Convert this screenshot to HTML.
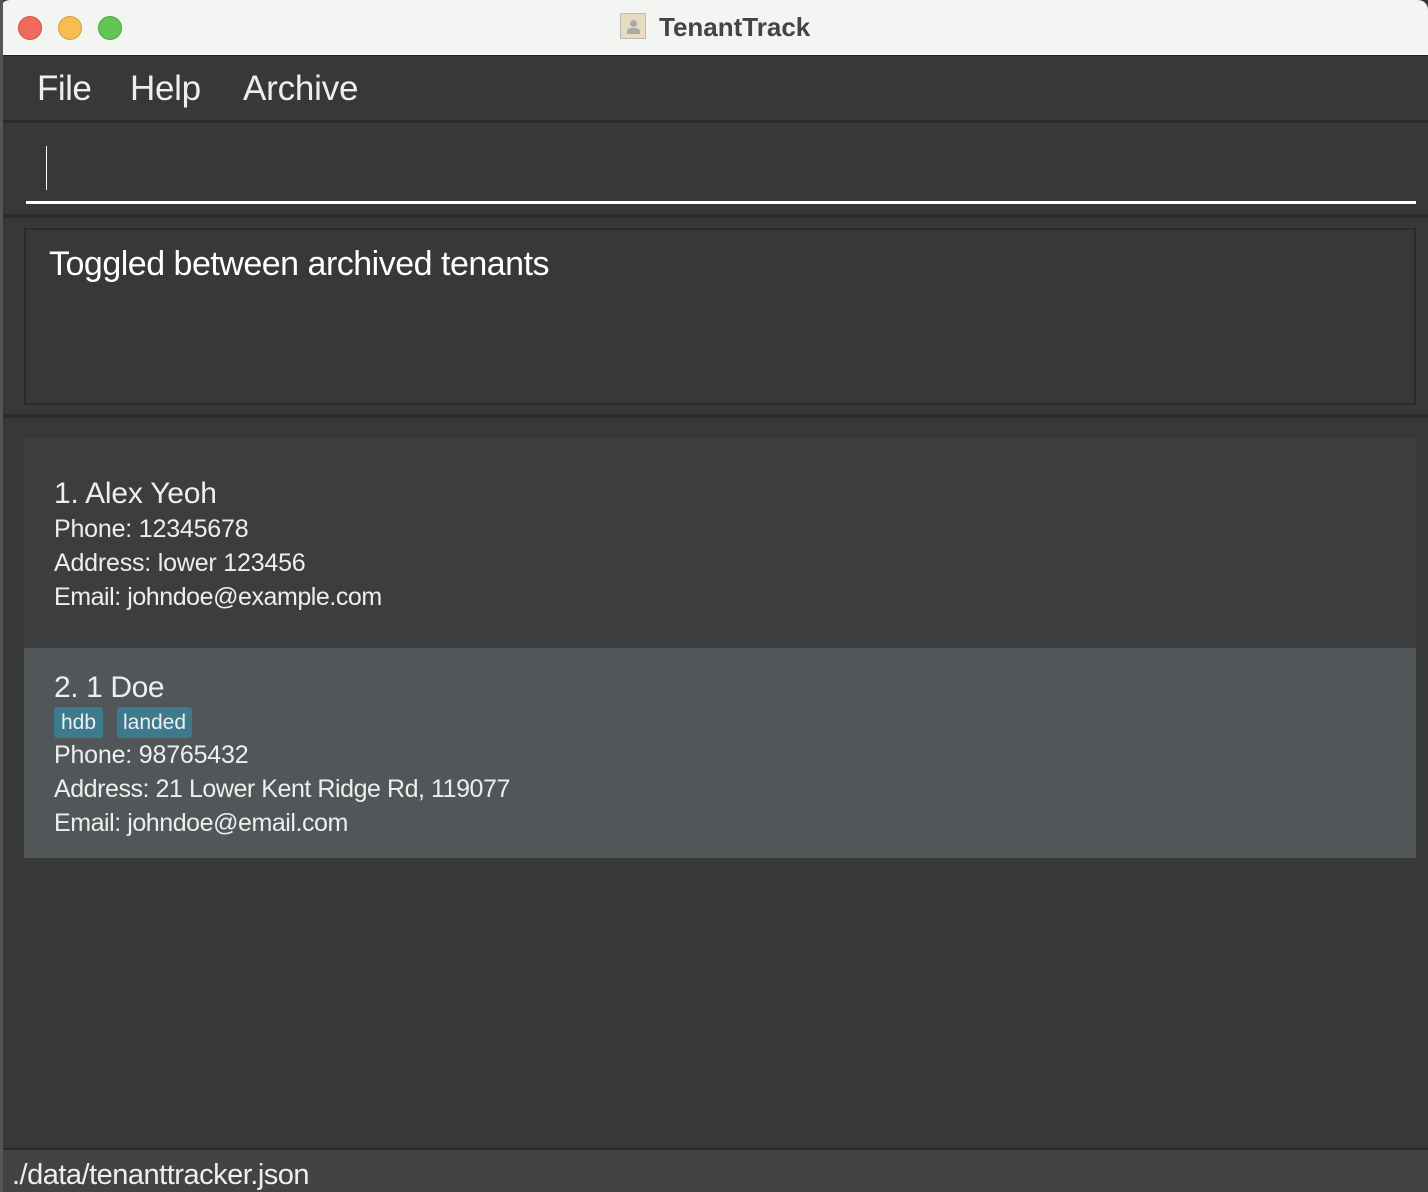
<!DOCTYPE html>
<html><head><meta charset="utf-8"><style>
*{margin:0;padding:0;box-sizing:border-box}
body{width:1428px;height:1192px;background:#383838;font-family:"Liberation Sans",sans-serif;position:relative;overflow:hidden;color:#eee}
.a{position:absolute}
.t{white-space:nowrap}
.d{font-size:25px;letter-spacing:-0.45px}
</style></head><body>
<div class="a" style="left:0;top:0;width:1428px;height:56px;background:#f3f5f2;border-radius:10px 10px 0 0;border-bottom:1px solid #222"></div>
<div class="a" style="left:0;top:0;width:3px;height:1192px;background:#555"></div>
<div class="a" style="left:18px;top:16px;width:24px;height:24px;border-radius:50%;background:#ee6a5f;border:1px solid #d0534a"></div>
<div class="a" style="left:58px;top:16px;width:24px;height:24px;border-radius:50%;background:#f5be4f;border:1px solid #d6a13a"></div>
<div class="a" style="left:98px;top:16px;width:24px;height:24px;border-radius:50%;background:#62c554;border:1px solid #4ba83f"></div>
<div class="a" style="left:620px;top:13px;width:26px;height:26px;background:#e8dcc0;border:1px solid #bbb"><div class="a" style="left:9px;top:6px;width:7px;height:7px;border-radius:50%;background:#aaa"></div><div class="a" style="left:6px;top:14px;width:13px;height:6px;background:#aaa;border-radius:4px 4px 0 0"></div></div>
<div class="a t" style="left:659px;top:12px;font-size:26px;font-weight:bold;color:#444">TenantTrack</div>
<div class="a t" style="left:37px;top:69px;font-size:35px;color:#eee;letter-spacing:-0.5px">File</div>
<div class="a t" style="left:130px;top:69px;font-size:35px;color:#eee;letter-spacing:-0.3px">Help</div>
<div class="a t" style="left:243px;top:69px;font-size:35px;color:#eee;letter-spacing:-0.2px">Archive</div>
<div class="a" style="left:3px;top:120px;width:1425px;height:3px;background:#2b2b2b"></div>
<div class="a" style="left:46px;top:146px;width:1px;height:44px;background:#fff"></div>
<div class="a" style="left:26px;top:201px;width:1390px;height:3px;background:#fff"></div>
<div class="a" style="left:3px;top:214px;width:1425px;height:4px;background:#2b2b2b"></div>
<div class="a" style="left:24px;top:228px;width:1392px;height:177px;border:2px solid #2b2b2b"></div>
<div class="a t" style="left:49px;top:245px;font-size:34px;color:#fff;letter-spacing:-0.5px">Toggled between archived tenants</div>
<div class="a" style="left:3px;top:414px;width:1425px;height:4px;background:#2b2b2b"></div>
<div class="a" style="left:24px;top:438px;width:1392px;height:210px;background:#3c3d3f"></div>
<div class="a t" style="left:54px;top:477px;font-size:30px;letter-spacing:-0.2px">1. Alex Yeoh</div>
<div class="a t d" style="left:54px;top:515px;letter-spacing:-0.2px">Phone: 12345678</div>
<div class="a t d" style="left:54px;top:549px;letter-spacing:-0.2px">Address: lower 123456</div>
<div class="a t d" style="left:54px;top:583px">Email: johndoe@example.com</div>
<div class="a" style="left:24px;top:648px;width:1392px;height:210px;background:#515658"></div>
<div class="a t" style="left:54px;top:671px;font-size:30px;letter-spacing:-0.4px">2. 1 Doe</div>
<div class="a t" style="left:54px;top:707px;width:49px;height:31px;background:#3e7a8e;border-radius:3px;font-size:21px;line-height:31px;text-align:center">hdb</div>
<div class="a t" style="left:117px;top:707px;width:75px;height:31px;background:#3e7a8e;border-radius:3px;font-size:21px;line-height:31px;text-align:center">landed</div>
<div class="a t d" style="left:54px;top:741px;letter-spacing:-0.2px">Phone: 98765432</div>
<div class="a t d" style="left:54px;top:775px">Address: 21 Lower Kent Ridge Rd, 119077</div>
<div class="a t d" style="left:54px;top:809px">Email: johndoe@email.com</div>
<div class="a" style="left:3px;top:1148px;width:1425px;height:44px;background:#434343;border-top:2px solid #2b2b2b"></div>
<div class="a t" style="left:12px;top:1159px;font-size:29px;letter-spacing:-0.5px">./data/tenanttracker.json</div>
</body></html>
